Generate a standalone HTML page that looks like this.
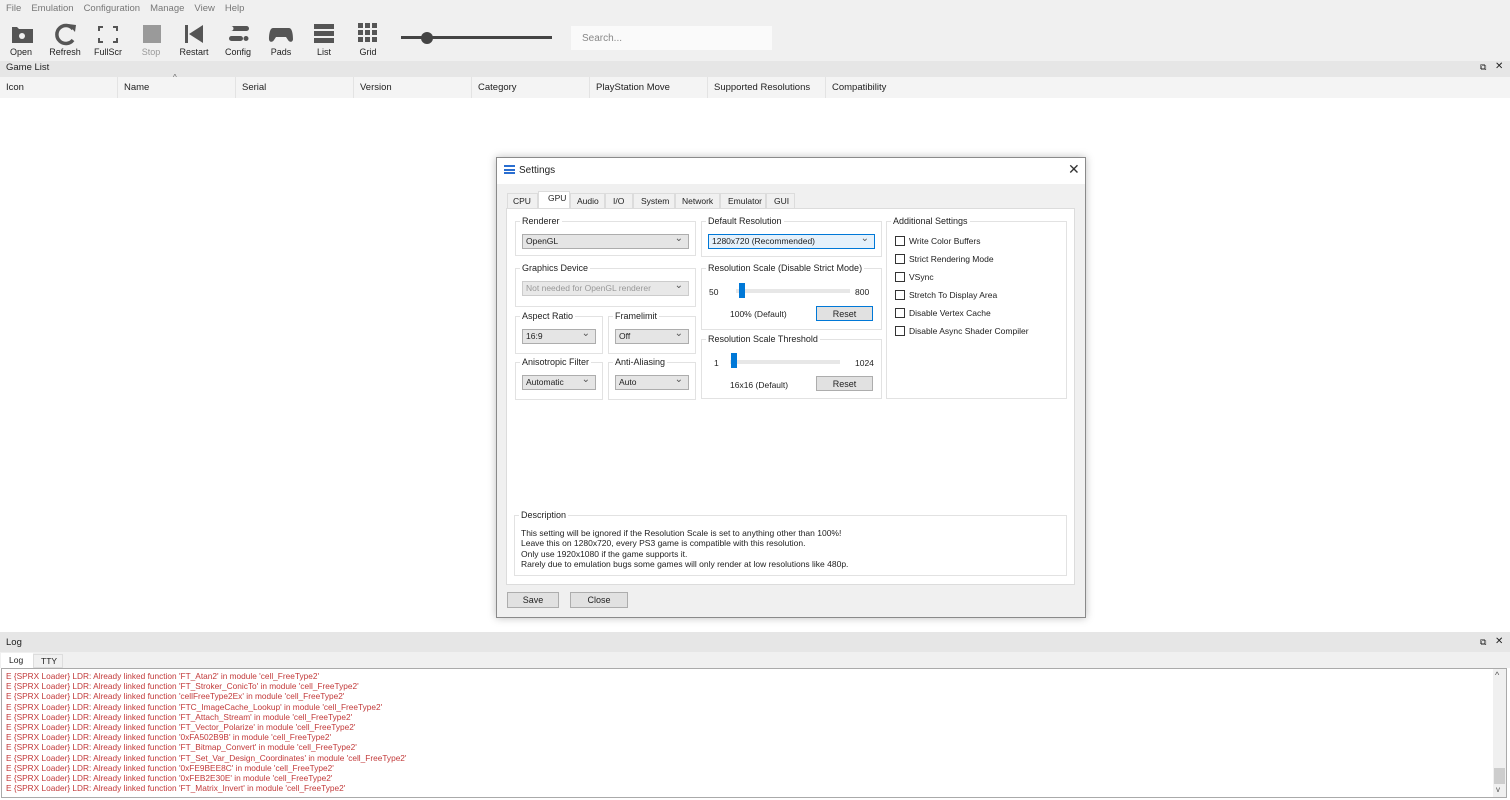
<!DOCTYPE html>
<html><head><meta charset="utf-8"><style>
*{box-sizing:border-box;margin:0;padding:0}
body{width:1510px;height:800px;position:relative;overflow:hidden;background:#fff;font-family:"Liberation Sans",sans-serif;font-size:9px;color:#222}
.a{position:absolute}
.menu span{margin-right:10px;color:#777;font-size:9.5px}
.tb{font-size:9px;color:#222;text-align:center;width:40px}
.col{position:absolute;top:77px;height:21px;border-right:1px solid #e3e3e3;padding:5px 6px;font-size:9.5px}
.grp{position:absolute;border:1px solid #dcdcdc;background:#fff}
.gl{position:absolute;background:#fff;padding:0 2px;font-size:9px;top:-6px;left:4px}
.cb{position:absolute;height:15px;border:1px solid #adadad;background:#e5e5e5;font-size:8.5px;padding:0 3px;line-height:13px}
.cb:after{content:"⌄";position:absolute;right:5px;top:-3px;font-size:10px;color:#555}
.btn{position:absolute;border:1px solid #adadad;background:#e1e1e1;text-align:center;font-size:9px;padding-top:2px}
.chk{position:absolute;left:8px;font-size:8.5px}
.chk i{display:inline-block;width:10px;height:10px;border:1px solid #333;background:#fff;vertical-align:-2px;margin-right:4px}
.log div{color:#c23a3a;font-size:8.3px;height:10.2px;line-height:10.2px;white-space:nowrap}
</style></head><body>
<div class="a" style="left:0;top:0;width:1510px;height:61px;background:#f0f0f0"></div>
<div class="a menu" style="left:6px;top:3px"><span>File</span><span>Emulation</span><span>Configuration</span><span>Manage</span><span>View</span><span>Help</span></div>
<svg class="a" style="left:0;top:20px" width="400" height="26">
<g fill="#555">
<path d="M12 7h5l2 2h14v14H12z"/><circle cx="22" cy="16" r="3" fill="#f0f0f0"/>
<path d="M73 9 A9 9 0 1 0 73 20" stroke="#555" stroke-width="3.5" fill="none"/><path d="M68 4l8 1-1 7z"/>
<path d="M98 6h5v2h-3v3h-2zM113 6h5v5h-2V8h-3zM98 18h2v3h3v2h-5zM116 18h2v5h-5v-2h3z"/>
<rect x="143" y="5" width="18" height="18" fill="#9a9a9a"/>
<rect x="185" y="5" width="3" height="18"/><path d="M189 14l14-9v18z"/>
<rect x="229" y="6" width="20" height="5" rx="2.5"/><rect x="229" y="16" width="14" height="5" rx="2.5"/><circle cx="231" cy="8.5" r="2.5" fill="#f0f0f0"/><circle cx="246" cy="18.5" r="2.5"/>
<path d="M273 8h16c3 0 4 6 4 11 0 3-3 4-5 1l-2-3h-10l-2 3c-2 3-5 2-5-1 0-5 1-11 4-11z"/>
<rect x="314" y="4" width="20" height="5"/><rect x="314" y="11" width="20" height="5"/><rect x="314" y="18" width="20" height="5"/>
<g><rect x="358" y="3" width="5" height="5"/><rect x="365" y="3" width="5" height="5"/><rect x="372" y="3" width="5" height="5"/><rect x="358" y="10" width="5" height="5"/><rect x="365" y="10" width="5" height="5"/><rect x="372" y="10" width="5" height="5"/><rect x="358" y="17" width="5" height="5"/><rect x="365" y="17" width="5" height="5"/><rect x="372" y="17" width="5" height="5"/></g>
</g></svg>
<div class="a tb" style="left:1px;top:47px">Open</div>
<div class="a tb" style="left:45px;top:47px">Refresh</div>
<div class="a tb" style="left:88px;top:47px">FullScr</div>
<div class="a tb" style="left:131px;top:47px;color:#999">Stop</div>
<div class="a tb" style="left:174px;top:47px">Restart</div>
<div class="a tb" style="left:218px;top:47px">Config</div>
<div class="a tb" style="left:261px;top:47px">Pads</div>
<div class="a tb" style="left:304px;top:47px">List</div>
<div class="a tb" style="left:348px;top:47px">Grid</div>
<div class="a" style="left:401px;top:36px;width:151px;height:3px;background:#444"></div>
<div class="a" style="left:421px;top:32px;width:12px;height:12px;border-radius:6px;background:#444"></div>
<div class="a" style="left:571px;top:26px;width:201px;height:24px;background:#fafafa;color:#888;font-size:10px;padding:7px 11px">Search...</div>
<div class="a" style="left:0;top:61px;width:1510px;height:16px;background:#e6e6e6;font-size:9.5px;padding:1px 6px">Game List</div>
<div class="a" style="left:1480px;top:62px;font-size:9px">⧉</div><div class="a" style="left:1495px;top:61px;font-size:10px">✕</div>
<div class="a" style="left:0;top:77px;width:1510px;height:21px;background:#f4f4f4"></div>
<div class="col" style="left:0;width:118px">Icon</div>
<div class="col" style="left:118px;width:118px">Name</div>
<div class="a" style="left:173px;top:73px;font-size:8px;color:#666">^</div>
<div class="col" style="left:236px;width:118px">Serial</div>
<div class="col" style="left:354px;width:118px">Version</div>
<div class="col" style="left:472px;width:118px">Category</div>
<div class="col" style="left:590px;width:118px">PlayStation Move</div>
<div class="col" style="left:708px;width:118px">Supported Resolutions</div>
<div class="col" style="left:826px;width:684px;border:none">Compatibility</div>
<div class="a" style="left:496px;top:157px;width:590px;height:461px;background:#f0f0f0;border:1px solid #8a8a8a;box-shadow:0 0 8px rgba(0,0,0,.25)">
 <div class="a" style="left:0;top:0;width:588px;height:26px;background:#fff"></div>
 <div class="a" style="left:7px;top:7px;width:11px;height:9px;border-top:2px solid #2a6ed0;border-bottom:2px solid #2a6ed0"><div style="margin-top:1.5px;height:2px;background:#2a6ed0"></div></div>
 <div class="a" style="left:22px;top:7px;font-size:10px">Settings</div>
 <div class="a" style="left:571px;top:3px;font-size:14px;color:#333">✕</div>
 <div class="a" style="left:10px;top:35px;font-size:8.5px;display:flex">
  <span style="width:31px;border:1px solid #dcdcdc;padding:2px 5px">CPU</span>
  <span style="width:32px;border:1px solid #dcdcdc;border-bottom:none;background:#fff;padding:1px 9px;margin-top:-2px;height:17px">GPU</span>
  <span style="width:35px;border:1px solid #dcdcdc;padding:2px 6px">Audio</span>
  <span style="width:28px;border:1px solid #dcdcdc;padding:2px 7px">I/O</span>
  <span style="width:42px;border:1px solid #dcdcdc;padding:2px 7px">System</span>
  <span style="width:45px;border:1px solid #dcdcdc;padding:2px 6px">Network</span>
  <span style="width:46px;border:1px solid #dcdcdc;padding:2px 7px">Emulator</span>
  <span style="width:29px;border:1px solid #dcdcdc;padding:2px 7px">GUI</span>
 </div>
 <div class="a" style="left:9px;top:50px;width:569px;height:377px;background:#fff;border:1px solid #dcdcdc">
  <div class="grp" style="left:8px;top:12px;width:181px;height:35px;border-color:#e2e2e2"><span class="gl">Renderer</span><div class="cb" style="left:6px;top:12px;width:167px">OpenGL</div></div>
  <div class="grp" style="left:8px;top:59px;width:181px;height:39px;border-color:#e2e2e2"><span class="gl">Graphics Device</span><div class="cb" style="left:6px;top:12px;width:167px;color:#999;background:#e8e8e8;border-color:#ccc">Not needed for OpenGL renderer</div></div>
  <div class="grp" style="left:8px;top:107px;width:88px;height:38px;border-color:#e2e2e2"><span class="gl">Aspect Ratio</span><div class="cb" style="left:6px;top:12px;width:74px">16:9</div></div>
  <div class="grp" style="left:101px;top:107px;width:88px;height:38px;border-color:#e2e2e2"><span class="gl">Framelimit</span><div class="cb" style="left:6px;top:12px;width:74px">Off</div></div>
  <div class="grp" style="left:8px;top:153px;width:88px;height:38px;border-color:#e2e2e2"><span class="gl">Anisotropic Filter</span><div class="cb" style="left:6px;top:12px;width:74px">Automatic</div></div>
  <div class="grp" style="left:101px;top:153px;width:88px;height:38px;border-color:#e2e2e2"><span class="gl">Anti-Aliasing</span><div class="cb" style="left:6px;top:12px;width:74px">Auto</div></div>
  <div class="grp" style="left:194px;top:12px;width:181px;height:36px;border-color:#e2e2e2"><span class="gl">Default Resolution</span><div class="cb" style="left:6px;top:12px;width:167px;background:#e5f1fb;border-color:#0078d7">1280x720 (Recommended)</div></div>
  <div class="grp" style="left:194px;top:59px;width:181px;height:62px;border-color:#e2e2e2"><span class="gl">Resolution Scale (Disable Strict Mode)</span>
   <div class="a" style="left:7px;top:18px;font-size:8.5px">50</div><div class="a" style="left:34px;top:20px;width:114px;height:4px;background:#e7e7e7"></div><div class="a" style="left:37px;top:14px;width:6px;height:15px;background:#0078d7"></div><div class="a" style="left:153px;top:18px;font-size:8.5px">800</div>
   <div class="a" style="left:28px;top:40px;font-size:8.5px">100% (Default)</div><div class="btn" style="left:114px;top:37px;width:57px;height:15px;border-color:#0078d7;border-width:1.5px">Reset</div></div>
  <div class="grp" style="left:194px;top:130px;width:181px;height:60px;border-color:#e2e2e2"><span class="gl">Resolution Scale Threshold</span>
   <div class="a" style="left:12px;top:18px;font-size:8.5px">1</div><div class="a" style="left:28px;top:20px;width:110px;height:4px;background:#e7e7e7"></div><div class="a" style="left:29px;top:13px;width:6px;height:15px;background:#0078d7"></div><div class="a" style="left:153px;top:18px;font-size:8.5px">1024</div>
   <div class="a" style="left:28px;top:40px;font-size:8.5px">16x16 (Default)</div><div class="btn" style="left:114px;top:36px;width:57px;height:15px">Reset</div></div>
  <div class="grp" style="left:379px;top:12px;width:181px;height:178px;border-color:#e2e2e2"><span class="gl">Additional Settings</span>
   <div class="chk" style="top:14px"><i></i>Write Color Buffers</div>
   <div class="chk" style="top:32px"><i></i>Strict Rendering Mode</div>
   <div class="chk" style="top:50px"><i></i>VSync</div>
   <div class="chk" style="top:68px"><i></i>Stretch To Display Area</div>
   <div class="chk" style="top:86px"><i></i>Disable Vertex Cache</div>
   <div class="chk" style="top:104px"><i></i>Disable Async Shader Compiler</div></div>
  <div class="grp" style="left:7px;top:306px;width:553px;height:61px;border-color:#e2e2e2"><span class="gl">Description</span>
   <div class="a" style="left:6px;top:12px;font-size:8.5px;line-height:10.3px">This setting will be ignored if the Resolution Scale is set to anything other than 100%!<br>Leave this on 1280x720, every PS3 game is compatible with this resolution.<br>Only use 1920x1080 if the game supports it.<br>Rarely due to emulation bugs some games will only render at low resolutions like 480p.</div></div>
 </div>
 <div class="btn" style="left:10px;top:434px;width:52px;height:16px">Save</div>
 <div class="btn" style="left:73px;top:434px;width:58px;height:16px">Close</div>
</div>
<div class="a" style="left:0;top:632px;width:1510px;height:20px;background:#e6e6e6;font-size:9.5px;padding:5px 6px">Log</div>
<div class="a" style="left:1480px;top:637px;font-size:9px">⧉</div><div class="a" style="left:1495px;top:636px;font-size:10px">✕</div>
<div class="a" style="left:0;top:652px;width:1510px;height:16px;background:#f0f0f0"></div>
<div class="a" style="left:1px;top:653px;width:32px;height:15px;background:#fff;font-size:8.5px;padding:2px 8px">Log</div>
<div class="a" style="left:33px;top:654px;width:30px;height:14px;background:#f0f0f0;border:1px solid #ddd;font-size:8.5px;padding:1px 7px">TTY</div>
<div class="a log" style="left:1px;top:668px;width:1506px;height:130px;border:1px solid #aaa;background:#fff;padding:2px 4px;overflow:hidden">
<div>E {SPRX Loader} LDR: Already linked function 'FT_Atan2' in module 'cell_FreeType2'</div>
<div>E {SPRX Loader} LDR: Already linked function 'FT_Stroker_ConicTo' in module 'cell_FreeType2'</div>
<div>E {SPRX Loader} LDR: Already linked function 'cellFreeType2Ex' in module 'cell_FreeType2'</div>
<div>E {SPRX Loader} LDR: Already linked function 'FTC_ImageCache_Lookup' in module 'cell_FreeType2'</div>
<div>E {SPRX Loader} LDR: Already linked function 'FT_Attach_Stream' in module 'cell_FreeType2'</div>
<div>E {SPRX Loader} LDR: Already linked function 'FT_Vector_Polarize' in module 'cell_FreeType2'</div>
<div>E {SPRX Loader} LDR: Already linked function '0xFA502B9B' in module 'cell_FreeType2'</div>
<div>E {SPRX Loader} LDR: Already linked function 'FT_Bitmap_Convert' in module 'cell_FreeType2'</div>
<div>E {SPRX Loader} LDR: Already linked function 'FT_Set_Var_Design_Coordinates' in module 'cell_FreeType2'</div>
<div>E {SPRX Loader} LDR: Already linked function '0xFE9BEE8C' in module 'cell_FreeType2'</div>
<div>E {SPRX Loader} LDR: Already linked function '0xFEB2E30E' in module 'cell_FreeType2'</div>
<div>E {SPRX Loader} LDR: Already linked function 'FT_Matrix_Invert' in module 'cell_FreeType2'</div>
</div>
<div class="a" style="left:1493px;top:669px;width:13px;height:128px;background:#f0f0f0"></div>
<div class="a" style="left:1495px;top:670px;font-size:9px;color:#555">^</div>
<div class="a" style="left:1494px;top:768px;width:11px;height:16px;background:#cdcdcd"></div>
<div class="a" style="left:1496px;top:785px;font-size:8px;color:#555">v</div>
</body></html>
